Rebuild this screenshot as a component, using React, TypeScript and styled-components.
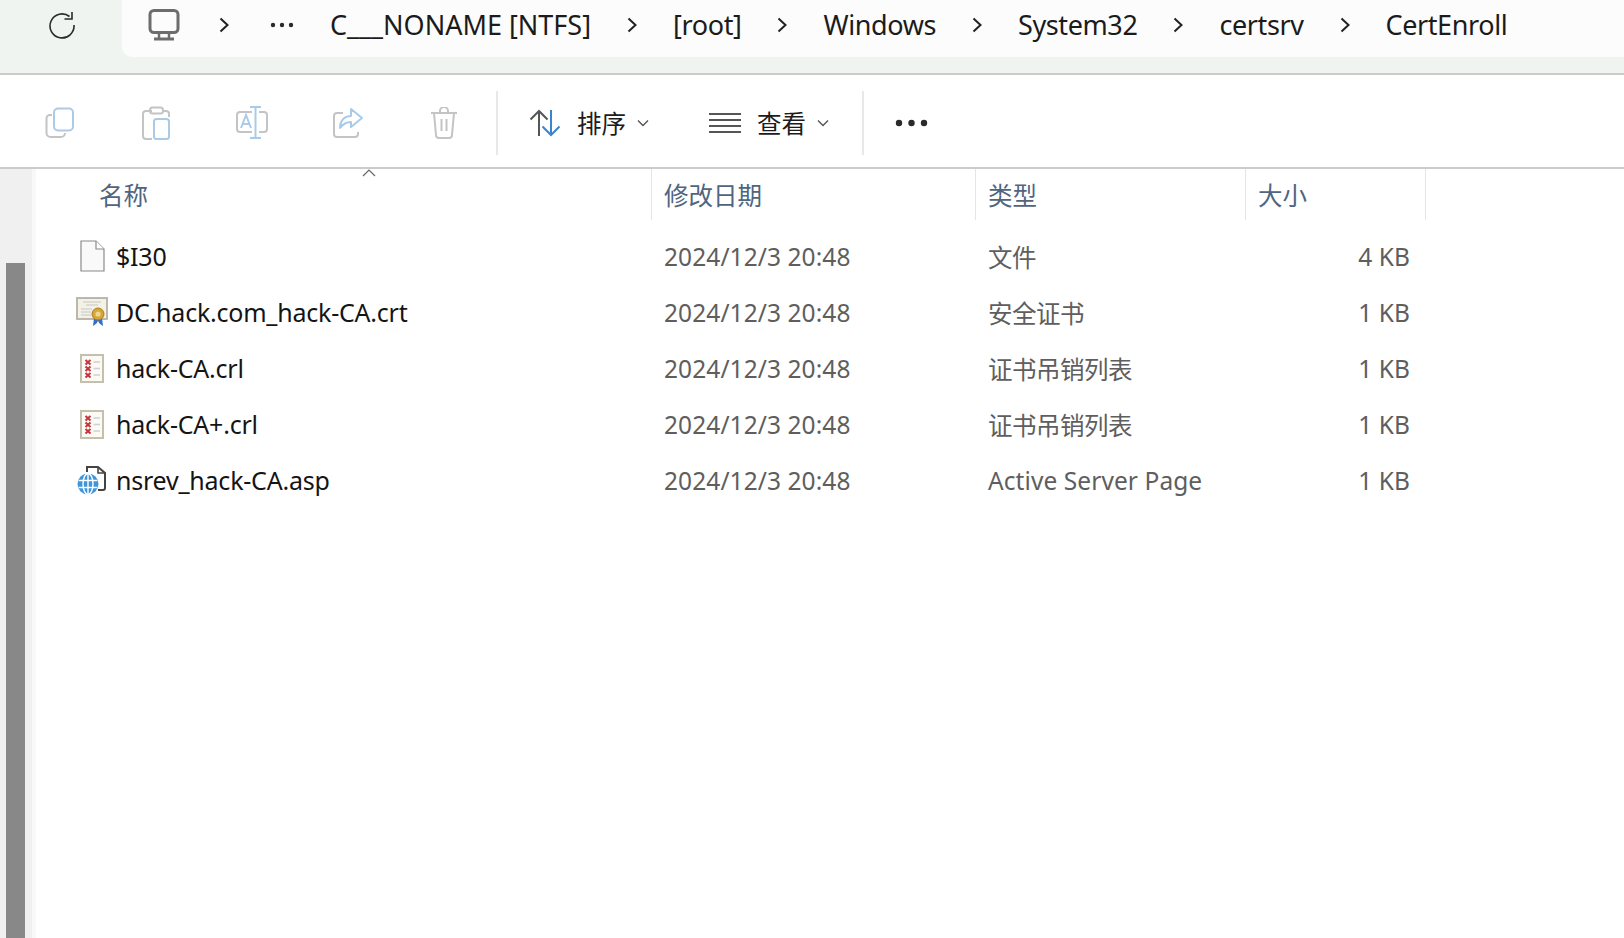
import React from "react";
import styled, { createGlobalStyle } from "styled-components";

const Global = createGlobalStyle`
  html, body { margin: 0; padding: 0; background: #fff; }
  body { font-family: "Noto Sans", "Noto Sans CJK SC", sans-serif; overflow: hidden; }
`;

const Page = styled.div`
  width: 1624px;
  height: 938px;
  display: flex;
  flex-direction: column;
  overflow: hidden;
`;

// address bar
const TopBar = styled.header`
  height: 73px;
  flex: none;
  display: flex;
  align-items: flex-start;
  background: #f0f4f1;
  border-bottom: 2px solid #c9ccc8;
`;
const Refresh = styled.div`
  width: 122px;
  height: 49px;
  flex: none;
  display: flex;
  align-items: center;
  padding-left: 48px;
  box-sizing: border-box;
`;
const Crumbs = styled.nav`
  flex: 1;
  height: 57px;
  box-sizing: border-box;
  padding: 0 0 8px 26px;
  display: flex;
  align-items: center;
  gap: 36px;
  background: #fcfcfc;
  border-bottom-left-radius: 10px;
`;
const PcIcon = styled.svg`
  margin-right: 3px;
`;
const LeadChevron = styled.span`
  display: flex;
  margin-right: 5px;
`;
const Crumb = styled.span<{ $loose?: boolean }>`
  font-size: 27px;
  letter-spacing: ${(p) => (p.$loose ? "0" : "-0.4px")};
  color: #1b1b1b;
  white-space: nowrap;
`;

// command bar
const ToolBar = styled.div`
  height: 94px;
  flex: none;
  box-sizing: border-box;
  display: flex;
  align-items: center;
  padding: 3px 0 0 12px;
  background: #fff;
  border-bottom: 2px solid #c9ccc8;
`;
const ToolIcon = styled.div`
  width: 96px;
  display: flex;
  justify-content: center;
`;
const Divider = styled.div<{ $left: number; $right: number }>`
  width: 2px;
  height: 64px;
  background: #e8e8e8;
  margin: 0 ${(p) => p.$right}px 0 ${(p) => p.$left}px;
`;
const ToolButton = styled.div<{ $right?: number }>`
  display: flex;
  align-items: center;
  margin-right: ${(p) => p.$right ?? 0}px;
  color: #1c1c1c;
  font-size: 24.5px;
`;
const ToolLabel = styled.span`
  margin: 2px 11px 0 16px;
  font-family: "Noto Sans CJK SC", sans-serif;
  line-height: 1;
`;

// file list
const Body = styled.div`
  flex: 1;
  display: flex;
  min-height: 0;
`;
const Gutter = styled.aside`
  width: 36px;
  flex: none;
  box-sizing: border-box;
  background: #f0f0f0;
  border-right: 4px solid #f8f8f8;
  padding: 94px 0 0 6px;
`;
const Thumb = styled.div`
  width: 19px;
  height: 100%;
  background: #888888;
`;
const List = styled.main`
  flex: 1;
  min-width: 0;
  background: #fff;
`;
const Columns = "616px 324px 270px 180px";
const Head = styled.div`
  display: grid;
  grid-template-columns: ${Columns};
  height: 51px;
  margin-bottom: 8px;
`;
const HeadCell = styled.div<{ $first?: boolean }>`
  position: relative;
  display: flex;
  align-items: center;
  padding-left: ${(p) => (p.$first ? 63 : 12)}px;
  border-right: 1px solid #e5e5e5;
  font-family: "Noto Sans CJK SC", sans-serif;
  font-size: 24.5px;
  color: #4f6580;
`;
const SortCaret = styled.svg`
  position: absolute;
  left: 326px;
  top: 0;
`;
const Row = styled.div`
  display: grid;
  grid-template-columns: ${Columns};
  height: 56px;
  align-items: center;
`;
const NameCell = styled.div`
  display: flex;
  align-items: center;
  padding-left: 40px;
  font-size: 25px;
  letter-spacing: -0.22px;
  color: #141414;
  white-space: nowrap;
`;
const IconSlot = styled.div`
  width: 32px;
  height: 32px;
  flex: none;
  margin-right: 8px;
  display: flex;
  align-items: center;
  justify-content: center;
`;
const Cell = styled.div<{ $right?: boolean; $cjk?: boolean }>`
  padding: ${(p) => (p.$right ? "0 16px 0 0" : "0 0 0 12px")};
  text-align: ${(p) => (p.$right ? "right" : "left")};
  font-size: 24.5px;
  letter-spacing: ${(p) => (p.$cjk ? "-0.5px" : "0.08px")};
  color: #5e5e5e;
  white-space: nowrap;
`;

const Chevron = () => (
  <svg width="10" height="16" viewBox="0 0 10 16" fill="none" stroke="#222" strokeWidth="2">
    <path d="M1.5 1.5 8.5 8l-7 6.5" />
  </svg>
);

const SmallChevron = () => (
  <svg width="12" height="8" viewBox="0 0 12 8" fill="none" stroke="#555" strokeWidth="1.4">
    <path d="M1 1.5 6 6.5l5-5" />
  </svg>
);

const DocIcon = () => (
  <svg width="25" height="32" viewBox="0 0 25 32">
    <path d="M1 1h15l8 8v22H1z" fill="#f9f9f9" stroke="#8a8a8a" strokeWidth="1.2" />
    <path d="M16 1v8h8" fill="#fff" stroke="#8a8a8a" strokeWidth="1.2" />
  </svg>
);

const CertIcon = () => (
  <svg width="32" height="30" viewBox="0 0 32 30">
    <rect x="1" y="1" width="30" height="21" fill="#f4f1e6" stroke="#b5b1a4" strokeWidth="1.8" />
    <path d="M7 5h18M10 8h12M5 12h11M5 15h10M5 18h10" stroke="#c6c6c6" strokeWidth="1" />
    <path d="M18 21l-1 8 3.500-2.500L22 24l1.500 2.500L27 29l-1-8z" fill="#2f6fd0" />
    <circle cx="22" cy="17" r="6" fill="#d7a436" stroke="#ad7c20" />
    <circle cx="22" cy="17" r="2.600" fill="#edd68f" />
  </svg>
);

const CrlIcon = () => (
  <svg width="24" height="29" viewBox="0 0 24 29">
    <rect x="1" y="1" width="22" height="27" fill="#fbfaf4" stroke="#c4c0ac" strokeWidth="2" />
    <path d="M5.500 6l5 4.500M10.500 6l-5 4.500M5.500 12.500l5 4.500M10.500 12.500l-5 4.500M5.500 19l5 4.500M10.500 19l-5 4.500" stroke="#c8323a" strokeWidth="2" />
    <path d="M13.500 8h6.500M13.500 14.500h6.500M13.500 21h6.500" stroke="#cdd0d6" strokeWidth="1.600" />
  </svg>
);

const WebIcon = () => (
  <svg width="30" height="30" viewBox="0 0 30 30">
    <path d="M10 7V2h11l7 6v15a2 2 0 0 1-2 2h-5" fill="none" stroke="#444" strokeWidth="2" />
    <path d="M21 2v6h7" fill="none" stroke="#444" strokeWidth="1.600" />
    <circle cx="11" cy="19" r="10.500" fill="#3d95dc" />
    <g fill="none" stroke="#fff" strokeWidth="1.400">
      <ellipse cx="11" cy="19" rx="5" ry="10.500" />
      <path d="M11 8.500v21M1.500 15.500h19M1.500 22.500h19" />
    </g>
  </svg>
);

const files = [
  { name: "$I30", icon: <DocIcon />, type: "文件", cjk: true, size: "4 KB" },
  { name: "DC.hack.com_hack-CA.crt", icon: <CertIcon />, type: "安全证书", cjk: true, size: "1 KB" },
  { name: "hack-CA.crl", icon: <CrlIcon />, type: "证书吊销列表", cjk: true, size: "1 KB" },
  { name: "hack-CA+.crl", icon: <CrlIcon />, type: "证书吊销列表", cjk: true, size: "1 KB" },
  { name: "nsrev_hack-CA.asp", icon: <WebIcon />, type: "Active Server Page", cjk: false, size: "1 KB" },
];

const crumbs = ["[root]", "Windows", "System32", "certsrv", "CertEnroll"];

export default function App() {
  return (
    <Page>
      <Global />
      <TopBar>
        <Refresh>
          <svg width="28" height="28" viewBox="0 0 28 28" fill="none" stroke="#2a2a2a" strokeWidth="1.6">
            <path d="M21.5 5.5A12 12 0 1 0 26 14" />
            <path d="M24 1v7h-7.5" />
          </svg>
        </Refresh>
        <Crumbs>
          <PcIcon width="32" height="32" viewBox="0 0 32 32" fill="none" stroke="#6d6d6d" strokeWidth="3">
            <rect x="2" y="1.5" width="28" height="22" rx="4" />
            <path d="M11 24v5M21 24v5" strokeWidth="2.5" />
            <path d="M6 30h20" />
          </PcIcon>
          <LeadChevron>
            <Chevron />
          </LeadChevron>
          <svg width="24" height="6" viewBox="0 0 24 6" fill="#2a2a2a">
            <circle cx="3" cy="3" r="2.2" />
            <circle cx="12" cy="3" r="2.2" />
            <circle cx="21" cy="3" r="2.2" />
          </svg>
          <Crumb $loose>C___NONAME [NTFS]</Crumb>
          {crumbs.map((c) => (
            <React.Fragment key={c}>
              <Chevron />
              <Crumb>{c}</Crumb>
            </React.Fragment>
          ))}
        </Crumbs>
      </TopBar>

      <ToolBar>
        <ToolIcon>
          <svg width="30" height="32" viewBox="0 0 30 32" fill="none" strokeWidth="2">
            <rect x="9" y="1.5" width="19" height="22" rx="4" stroke="#a9cbe8" />
            <path d="M7 8H5a3.5 3.5 0 0 0-3.5 3.500V26A4 4 0 0 0 5.500 30H16a4 4 0 0 0 4-4" stroke="#c4c4c4" />
          </svg>
        </ToolIcon>
        <ToolIcon>
          <svg width="30" height="34" viewBox="0 0 30 34" fill="none" strokeWidth="2">
            <path d="M11 5H5a3 3 0 0 0-3 3v22a3 3 0 0 0 3 3h6M21 5h4a3 3 0 0 1 3 3v3" stroke="#c4c4c4" />
            <rect x="9" y="1.500" width="13" height="6" rx="2.500" stroke="#c4c4c4" />
            <rect x="13" y="13" width="15" height="20" rx="2.500" stroke="#a9cbe8" />
          </svg>
        </ToolIcon>
        <ToolIcon>
          <svg width="34" height="34" viewBox="0 0 34 34" fill="none" strokeWidth="2">
            <path d="M17 6H5a3 3 0 0 0-3 3v14a3 3 0 0 0 3 3h12M24 6h5a3 3 0 0 1 3 3v14a3 3 0 0 1-3 3h-5" stroke="#c4c4c4" />
            <path d="M20.500 1v31M15 1h11M15 32h11" stroke="#a9cbe8" />
            <path d="M6 22l5-13 5 13M8 18h6" stroke="#a9cbe8" />
          </svg>
        </ToolIcon>
        <ToolIcon>
          <svg width="32" height="32" viewBox="0 0 32 32" fill="none" strokeWidth="2">
            <path d="M11 6H5a3 3 0 0 0-3 3v18a3 3 0 0 0 3 3h18a3 3 0 0 0 3-3v-2" stroke="#c4c4c4" />
            <path d="M19 2l11 9-11 9v-5c-5 0-8 2-11 6 0-7 4-12 11-12z" stroke="#a9cbe8" strokeLinejoin="round" />
          </svg>
        </ToolIcon>
        <ToolIcon>
          <svg width="28" height="32" viewBox="0 0 28 32" fill="none" stroke="#c4c4c4" strokeWidth="2">
            <path d="M1 6h26M10 6V4a3 3 0 0 1 8 0v2M4 6l2 22a3 3 0 0 0 3 3h10a3 3 0 0 0 3-3l2-22M11.500 12v12M16.500 12v12" />
          </svg>
        </ToolIcon>
        <Divider $left={4} $right={31} />
        <ToolButton $right={60}>
          <svg width="32" height="28" viewBox="0 0 32 28" fill="none" strokeWidth="2">
            <path d="M10 27V2M1.500 10.500 10 2l8.500 8.500" stroke="#555" />
            <path d="M22 1v25M13.500 17.500 22 26l8.500-8.500" stroke="#3a83cf" />
          </svg>
          <ToolLabel>排序</ToolLabel>
          <SmallChevron />
        </ToolButton>
        <ToolButton>
          <svg width="32" height="22" viewBox="0 0 32 22" fill="none" stroke="#555" strokeWidth="2">
            <path d="M0 2h32M0 8h32M0 14h32M0 20h32" />
          </svg>
          <ToolLabel>查看</ToolLabel>
          <SmallChevron />
        </ToolButton>
        <Divider $left={33} $right={31} />
        <svg width="33" height="8" viewBox="0 0 33 8" fill="#2a2a2a">
          <circle cx="4" cy="4" r="3.200" />
          <circle cx="16.500" cy="4" r="3.200" />
          <circle cx="29" cy="4" r="3.200" />
        </svg>
      </ToolBar>

      <Body>
        <Gutter>
          <Thumb />
        </Gutter>
        <List>
          <Head>
            <HeadCell $first>
              名称
              <SortCaret width="14" height="8" viewBox="0 0 14 8" fill="none" stroke="#666" strokeWidth="1.200">
                <path d="M1 7l6-6 6 6" />
              </SortCaret>
            </HeadCell>
            <HeadCell>修改日期</HeadCell>
            <HeadCell>类型</HeadCell>
            <HeadCell>大小</HeadCell>
          </Head>
          {files.map((f) => (
            <Row key={f.name}>
              <NameCell>
                <IconSlot>{f.icon}</IconSlot>
                {f.name}
              </NameCell>
              <Cell>2024/12/3 20:48</Cell>
              <Cell $cjk={f.cjk}>{f.type}</Cell>
              <Cell $right>{f.size}</Cell>
            </Row>
          ))}
        </List>
      </Body>
    </Page>
  );
}
